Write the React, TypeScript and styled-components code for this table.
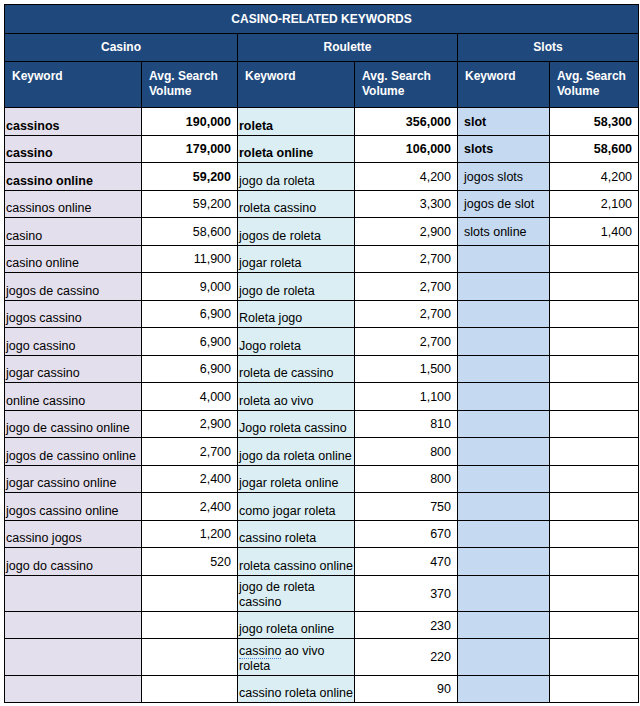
import React from 'react';
import styled, {createGlobalStyle} from 'styled-components';

type Entry = [string, string, boolean?];

const casino: Entry[] = [
  ['cassinos', '190,000', true],
  ['cassino', '179,000', true],
  ['cassino online', '59,200', true],
  ['cassinos online', '59,200'],
  ['casino', '58,600'],
  ['casino online', '11,900'],
  ['jogos de cassino', '9,000'],
  ['jogos cassino', '6,900'],
  ['jogo cassino', '6,900'],
  ['jogar cassino', '6,900'],
  ['online cassino', '4,000'],
  ['jogo de cassino online', '2,900'],
  ['jogos de cassino online', '2,700'],
  ['jogar cassino online', '2,400'],
  ['jogos cassino online', '2,400'],
  ['cassino jogos', '1,200'],
  ['jogo do cassino', '520'],
];

const roulette: Entry[] = [
  ['roleta', '356,000', true],
  ['roleta online', '106,000', true],
  ['jogo da roleta', '4,200'],
  ['roleta cassino', '3,300'],
  ['jogos de roleta', '2,900'],
  ['jogar roleta', '2,700'],
  ['jogo de roleta', '2,700'],
  ['Roleta jogo', '2,700'],
  ['Jogo roleta', '2,700'],
  ['roleta de cassino', '1,500'],
  ['roleta ao vivo', '1,100'],
  ['Jogo roleta cassino', '810'],
  ['jogo da roleta online', '800'],
  ['jogar roleta online', '800'],
  ['como jogar roleta', '750'],
  ['cassino roleta', '670'],
  ['roleta cassino online', '470'],
  ['jogo de roleta cassino', '370'],
  ['jogo roleta online', '230'],
  ['cassino ao vivo roleta', '220'],
  ['cassino roleta online', '90'],
];

const slots: Entry[] = [
  ['slot', '58,300', true],
  ['slots', '58,600', true],
  ['jogos slots', '4,200'],
  ['jogos de slot', '2,100'],
  ['slots online', '1,400'],
];

// row heights past the first 17 rows (two of them wrap onto two lines)
const rowHeight = (i: number) => {
  if (i === 17 || i === 19) return '36.5px';
  if (i > 17) return '27px';
  return '27.5px';
};

const colors = {
  header: '#1f497d',
  casino: '#e4dfec',
  roulette: '#daeef3',
  slots: '#c5d9f1',
  border: '#000',
};

const GlobalStyle = createGlobalStyle`
  body {
    margin: 0;
    background: #fff;
    font-family: "Liberation Sans", Arial, sans-serif;
  }
`;

const Page = styled.div`
  padding: 4px 0 0 4px;
`;

const Table = styled.table`
  border-collapse: collapse;
  table-layout: fixed;
  width: 634px;
  font-size: 12.5px;
  color: #000;
`;

const HeadCell = styled.th<{$align?: 'left' | 'center'}>`
  background: ${colors.header};
  color: #fff;
  font-weight: bold;
  font-size: 12px;
  border: 1px solid ${colors.border};
  text-align: ${p => p.$align || 'center'};
  vertical-align: ${p => (p.$align === 'left' ? 'top' : 'middle')};
  padding: ${p => (p.$align === 'left' ? '7px 6px 0 7px' : '0')};
  line-height: 15px;
`;

const TitleRow = styled.tr`
  height: 29px;
`;

const GroupRow = styled.tr`
  height: 28px;
`;

const LabelRow = styled.tr`
  height: 46px;
`;

const DataRow = styled.tr<{$height: string}>`
  height: ${p => p.$height};
`;

const KeywordCell = styled.td<{$bg: string; $bold?: boolean}>`
  background: ${p => p.$bg};
  border: 1px solid ${colors.border};
  font-weight: ${p => (p.$bold ? 'bold' : 'normal')};
  vertical-align: bottom;
  padding: 0 2px 1px 1px;
  line-height: 15px;
  overflow: hidden;
  white-space: nowrap;
`;

const SlotCell = styled(KeywordCell)`
  vertical-align: middle;
  padding: 2px 4px 0 6px;
`;

const NumberCell = styled.td<{$bold?: boolean}>`
  background: #fff;
  border: 1px solid ${colors.border};
  font-weight: ${p => (p.$bold ? 'bold' : 'normal')};
  text-align: right;
  vertical-align: middle;
  padding: 2px 6px 0 2px;
  line-height: 15px;
  white-space: nowrap;
`;

// spell-check mark under a word
const Squiggle = styled.span`
  border-bottom: 1px dotted #4a80e0;
  padding-bottom: 0;
`;

const keywordText = (text: string) => {
  if (text === 'jogo de roleta cassino') {
    return <>jogo de roleta<br />cassino</>;
  }
  if (text === 'cassino ao vivo roleta') {
    return <><Squiggle>cassino</Squiggle> ao vivo<br />roleta</>;
  }
  return text;
};

const App = () => {
  const rowCount = roulette.length;

  return (
    <Page>
      <GlobalStyle />
      <Table>
        <colgroup>
          <col style={{width: 137}} />
          <col style={{width: 96}} />
          <col style={{width: 117}} />
          <col style={{width: 103}} />
          <col style={{width: 92}} />
          <col style={{width: 89}} />
        </colgroup>
        <thead>
          <TitleRow>
            <HeadCell colSpan={6}>CASINO-RELATED KEYWORDS</HeadCell>
          </TitleRow>
          <GroupRow>
            <HeadCell colSpan={2}>Casino</HeadCell>
            <HeadCell colSpan={2}>Roulette</HeadCell>
            <HeadCell colSpan={2}>Slots</HeadCell>
          </GroupRow>
          <LabelRow>
            {[0, 1, 2].map(i => (
              <React.Fragment key={i}>
                <HeadCell $align="left">Keyword</HeadCell>
                <HeadCell $align="left">Avg. Search Volume</HeadCell>
              </React.Fragment>
            ))}
          </LabelRow>
        </thead>
        <tbody>
          {Array.from({length: rowCount}).map((_, i) => {
            const c = casino[i];
            const r = roulette[i];
            const s = slots[i];
            return (
              <DataRow key={i} $height={rowHeight(i)}>
                <KeywordCell $bg={colors.casino} $bold={c?.[2]}>{c?.[0]}</KeywordCell>
                <NumberCell $bold={c?.[2]}>{c?.[1]}</NumberCell>
                <KeywordCell $bg={colors.roulette} $bold={r?.[2]}>{r && keywordText(r[0])}</KeywordCell>
                <NumberCell $bold={r?.[2]}>{r?.[1]}</NumberCell>
                <SlotCell $bg={colors.slots} $bold={s?.[2]}>{s?.[0]}</SlotCell>
                <NumberCell $bold={s?.[2]}>{s?.[1]}</NumberCell>
              </DataRow>
            );
          })}
        </tbody>
      </Table>
    </Page>
  );
};

export default App;
